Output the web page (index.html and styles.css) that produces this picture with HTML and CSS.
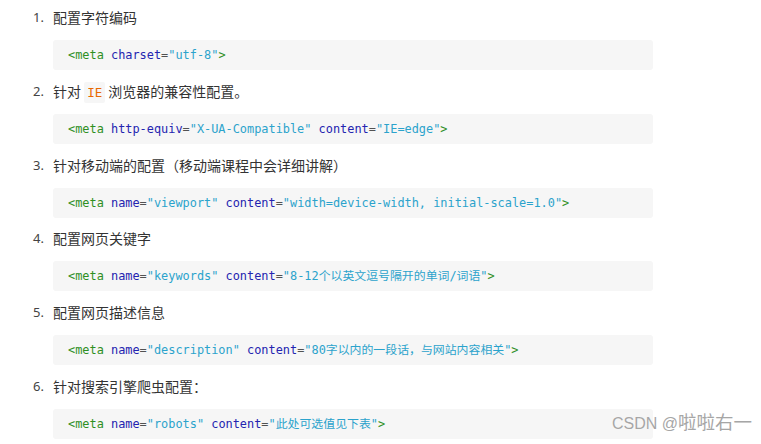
FILE: index.html
```html
<!doctype html>
<html>
<head>
    <meta charset="utf-8">
    <link rel="stylesheet" href="styles.css">
</head>
<body>
    <ol class="steps">
        <li>
            <p class="title">配置字符编码</p>
            <pre class="code"><span class="tag">&lt;meta</span> <span class="attr">charset</span>=<span class="val">"utf-8"</span><span class="tag">&gt;</span></pre>
        </li>
        <li>
            <p class="title">针对 <code class="inline">IE</code> 浏览器的兼容性配置。</p>
            <pre class="code"><span class="tag">&lt;meta</span> <span class="attr">http-equiv</span>=<span class="val">"X-UA-Compatible"</span> <span class="attr">content</span>=<span class="val">"IE=edge"</span><span class="tag">&gt;</span></pre>
        </li>
        <li>
            <p class="title">针对移动端的配置（移动端课程中会详细讲解）</p>
            <pre class="code"><span class="tag">&lt;meta</span> <span class="attr">name</span>=<span class="val">"viewport"</span> <span class="attr">content</span>=<span class="val">"width=device-width, initial-scale=1.0"</span><span class="tag">&gt;</span></pre>
        </li>
        <li>
            <p class="title">配置网页关键字</p>
            <pre class="code"><span class="tag">&lt;meta</span> <span class="attr">name</span>=<span class="val">"keywords"</span> <span class="attr">content</span>=<span class="val">"8-12个以英文逗号隔开的单词/词语"</span><span class="tag">&gt;</span></pre>
        </li>
        <li>
            <p class="title">配置网页描述信息</p>
            <pre class="code"><span class="tag">&lt;meta</span> <span class="attr">name</span>=<span class="val">"description"</span> <span class="attr">content</span>=<span class="val">"80字以内的一段话，与网站内容相关"</span><span class="tag">&gt;</span></pre>
        </li>
        <li>
            <p class="title">针对搜索引擎爬虫配置：</p>
            <pre class="code"><span class="tag">&lt;meta</span> <span class="attr">name</span>=<span class="val">"robots"</span> <span class="attr">content</span>=<span class="val">"此处可选值见下表"</span><span class="tag">&gt;</span></pre>
        </li>
    </ol>
    <div class="watermark">CSDN @<span class="author">啦啦右一</span></div>
</body>
</html>
```

FILE: styles.css
```css
html, body {
    margin: 0;
    background: #fff;
    font-family: "Noto Sans CJK SC", "Noto Sans", sans-serif;
    color: #333;
}

body {
    position: relative;
    height: 444px;
    overflow: hidden;
}

.steps {
    margin: 0;
    padding: 6px 0 0 33px;
    width: 620px;
    list-style: none;
    counter-reset: step;
}

.steps li {
    counter-increment: step;
    display: grid;
    grid-template-columns: 20px 600px;
    font-size: 14px;
    line-height: 22px;
}

.steps li::before {
    content: counter(step) ".";
    grid-row: 1;
    grid-column: 1;
    height: 22px;
    color: #444;
    font-family: "Noto Sans", sans-serif;
    font-size: 13px;
}

.title {
    grid-column: 2;
    margin: 0;
    height: 22px;
}

.inline {
    font-family: "DejaVu Sans Mono", monospace;
    font-size: 12.5px;
    color: #e96900;
    background: #f6f6f6;
    padding: 3px 3px;
    border-radius: 2px;
}

.code {
    grid-column: 2;
    margin: 12px 0 9.8px;
    padding: 0 15px;
    height: 30px;
    line-height: 30px;
    background: #f6f6f6;
    border-radius: 3px;
    font-family: "DejaVu Sans Mono", "Noto Sans CJK SC", monospace;
    font-size: 11.9px;
    color: #525252;
}

.tag {
    color: #2f8f1f;
}

.attr {
    color: #2424b0;
}

.val {
    color: #2ba3cc;
}

.watermark {
    position: absolute;
    left: 612px;
    top: 413px;
    font-family: "Liberation Sans", "Noto Sans CJK SC", sans-serif;
    font-size: 16px;
    line-height: 20px;
    color: #a6a6a6;
    text-shadow: 0 0 1px #fff;
}

.author {
    font-size: 18.5px;
}
```
